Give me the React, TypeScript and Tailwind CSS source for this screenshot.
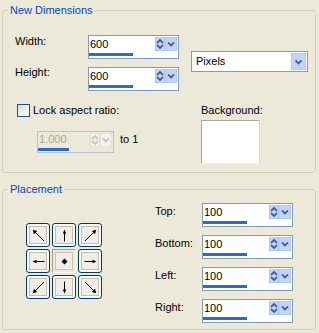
import React from "react";

function UpDown({ disabled = false }: { disabled?: boolean }) {
  const c = disabled ? "#C9C7BA" : "#4D6185";
  return (
    <svg width="8" height="12" viewBox="0 0 8 12">
      <polyline points="1,5 4,2 7,5" fill="none" stroke={c} strokeWidth="1.8" />
      <polyline points="1,7 4,10 7,7" fill="none" stroke={c} strokeWidth="1.8" />
    </svg>
  );
}

function Chevron({ disabled = false, size = 8 }: { disabled?: boolean; size?: number }) {
  const c = disabled ? "#C9C7BA" : "#4D6185";
  return (
    <svg width={size} height="6" viewBox="0 0 8 6">
      <polyline points="1,1.5 4,4.5 7,1.5" fill="none" stroke={c} strokeWidth="1.8" />
    </svg>
  );
}

function SpinField({
  value,
  disabled = false,
}: {
  value: string;
  disabled?: boolean;
}) {
  const btn = disabled
    ? "border-[#E3E1D6] bg-[#F3F2EC]"
    : "border-[#B4C8F5] bg-[#C3D4FC]";
  return (
    <div
      className={
        disabled
          ? "flex h-[22px] w-[77px] flex-col border border-[#B6C3D6] bg-[#ECE9D8]"
          : "flex h-[24px] w-[91px] flex-col border border-[#7F9DB9] bg-white"
      }
    >
      <div className={disabled ? "flex h-[16px] items-start" : "flex h-[17px] items-start"}>
        <span
          className={
            disabled
              ? "flex-1 pl-[1px] leading-[14px] text-[#ACA899]"
              : "flex-1 pl-[1px] leading-[16px]"
          }
        >
          {value}
        </span>
        <div className="mt-px mr-px flex">
          <div className={`flex h-[14px] w-[10px] items-center justify-center border ${btn}`}>
            <UpDown disabled={disabled} />
          </div>
          <div className={`flex h-[14px] w-[12px] items-center justify-center border ${btn}`}>
            <Chevron disabled={disabled} />
          </div>
        </div>
      </div>
      <div className={disabled ? "h-[3px] w-[31px] bg-[#316AC5]" : "h-[3px] w-[44px] bg-[#316AC5]"} />
    </div>
  );
}

function Arrow({ dir }: { dir: string }) {
  if (dir === "c") {
    return (
      <svg width="15" height="15" viewBox="0 0 15 15">
        <polygon points="7.5,4.5 10.5,7.5 7.5,10.5 4.5,7.5" fill="#000" />
      </svg>
    );
  }
  const cardinal: Record<string, number> = { n: 0, e: 90, s: 180, w: 270 };
  const diagonal: Record<string, number> = { nw: 0, ne: 90, se: 180, sw: 270 };
  if (dir in cardinal) {
    return (
      <svg width="15" height="15" viewBox="0 0 15 15">
        <g transform={`rotate(${cardinal[dir]} 7.5 7.5)`}>
          <line x1="7.5" y1="4" x2="7.5" y2="13.5" stroke="#000" strokeWidth="1" />
          <polygon points="7.5,1.5 5.8,5.5 9.2,5.5" fill="#000" />
        </g>
      </svg>
    );
  }
  return (
    <svg width="15" height="15" viewBox="0 0 15 15">
      <g transform={`rotate(${diagonal[dir]} 7.5 7.5)`}>
        <line x1="3.5" y1="3.5" x2="13" y2="13" stroke="#000" strokeWidth="1" />
        <polygon points="1.8,1.8 6.2,2.9 2.9,6.2" fill="#000" />
      </g>
    </svg>
  );
}

function DirButton({ dir }: { dir: string }) {
  if (dir === "c") {
    return (
      <div className="flex h-[24px] w-[24px] items-center justify-center border border-t-[#A5A28F] border-l-[#A5A28F] border-r-[#F7F6F1] border-b-[#F7F6F1] bg-[#ECE9D8]">
        <div className="flex h-[18px] w-[18px] items-center justify-center border border-[#C9C6B6] bg-[#EFEEE8]">
          <Arrow dir="c" />
        </div>
      </div>
    );
  }
  return (
    <div className="flex h-[24px] w-[24px] items-center justify-center rounded-[3px] border border-[#003C74] bg-[#F8F7F3]">
      <div className="flex h-[18px] w-[18px] items-center justify-center border border-[#C2BFB0] bg-[#EFEEE8]">
        <Arrow dir={dir} />
      </div>
    </div>
  );
}

const placement = [
  { label: "Top:", value: "100" },
  { label: "Bottom:", value: "100" },
  { label: "Left:", value: "100" },
  { label: "Right:", value: "100" },
];

export default function App() {
  return (
    <div className="h-[333px] w-[319px] overflow-hidden bg-[#ECE9D8] pt-[4px] font-['Liberation_Sans',Arial,sans-serif] text-[11px] leading-[13px] text-black">
      <fieldset className="ml-[2px] w-[314px] rounded-[3px] border border-[#D0D0BF]">
        <legend className="ml-[5px] px-[2px] text-[#0046D5]">New Dimensions</legend>
        <div className="pb-[8px] pl-[12px]">
          <div className="mt-[18px] flex items-start">
            <div className="flex flex-col gap-[8px]">
              <div className="flex items-start">
                <span className="w-[73px]">Width:</span>
                <SpinField value="600" />
              </div>
              <div className="flex items-start">
                <span className="-mt-px w-[73px]">Height:</span>
                <SpinField value="600" />
              </div>
            </div>
            <div className="mt-[16px] ml-[12px] flex h-[21px] w-[117px] items-center border border-[#7F9DB9] bg-white">
              <span className="flex-1 pl-[4px]">Pixels</span>
              <div className="mr-px flex h-[17px] w-[15px] items-center justify-center border border-[#B4C8F5] bg-[#C3D4FC]">
                <Chevron size={9} />
              </div>
            </div>
          </div>

          <div className="mt-[13px] flex items-start">
            <div className="w-[186px]">
              <label className="flex items-center">
                <span className="ml-[2px] h-[13px] w-[13px] border border-[#1C5180] bg-linear-to-br from-[#DCDCD7] to-white" />
                <span className="ml-[3px]">Lock aspect ratio:</span>
              </label>
              <div className="mt-[14px] ml-[22px] flex items-start">
                <SpinField value="1.000" disabled />
                <span className="mt-[2px] ml-[6px]">to 1</span>
              </div>
            </div>
            <div className="flex flex-col">
              <span>Background:</span>
              <div className="mt-[3px] h-[44px] w-[59px] border border-t-[#ACA899] border-l-[#ACA899] border-r-[#DCD9CA] border-b-[#F1EFE2] bg-white" />
            </div>
          </div>
        </div>
      </fieldset>

      <fieldset className="mt-[10px] ml-[2px] w-[314px] rounded-[3px] border border-[#D0D0BF]">
        <legend className="ml-[5px] px-[2px] text-[#0046D5]">Placement</legend>
        <div className="flex items-start pb-[6px]">
          <div className="mt-[27px] ml-[23px] grid grid-cols-3 gap-[2px]">
            {["nw", "n", "ne", "w", "c", "e", "sw", "s", "se"].map((d) => (
              <DirButton key={d} dir={d} />
            ))}
          </div>
          <div className="mt-[7px] ml-[53px] flex flex-col gap-[8px]">
            {placement.map((p) => (
              <div key={p.label} className="flex items-start">
                <span className="w-[47px] pt-[2px]">{p.label}</span>
                <SpinField value={p.value} />
              </div>
            ))}
          </div>
        </div>
      </fieldset>
    </div>
  );
}
